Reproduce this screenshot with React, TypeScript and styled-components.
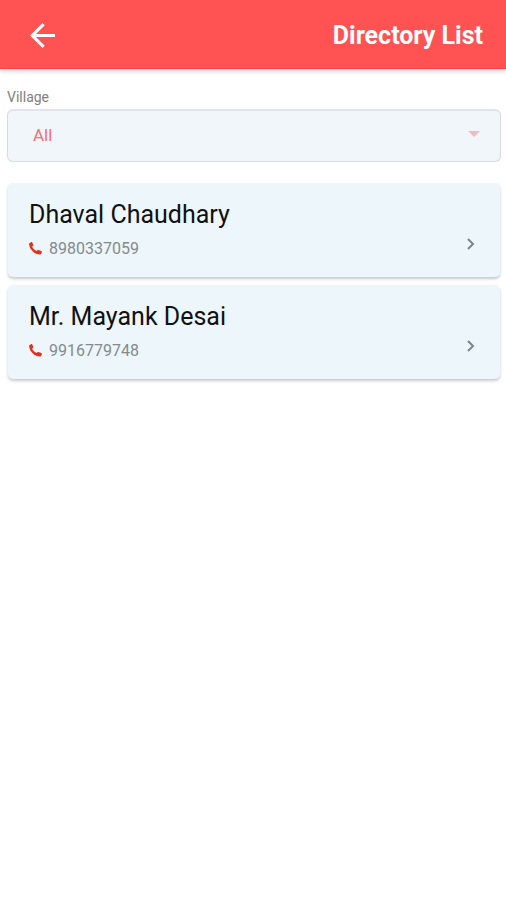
import React from "react";
import styled, { createGlobalStyle } from "styled-components";

const GlobalStyle = createGlobalStyle`
  * { box-sizing: border-box; }
  body { margin: 0; background: #fff; font-family: Roboto, sans-serif; }
  h1, h2, ul { margin: 0; padding: 0; }
`;

const AppBar = styled.header`
  display: flex;
  align-items: center;
  justify-content: space-between;
  height: 69px;
  padding: 3px 23px 0 30px;
  border-bottom: 1px solid #ee4747;
  background: #ff5252;
  color: #fff;
  box-shadow: 0 2px 5px rgba(0, 0, 0, 0.2);
`;

const BackButton = styled.button`
  display: flex;
  padding: 0;
  border: 0;
  background: none;
  color: inherit;
  cursor: pointer;
`;

const Title = styled.h1`
  font-size: 25px;
  line-height: 32px;
  font-weight: 700;
`;

const Content = styled.main`
  padding: 20px 5px 20px 7px;
`;

const Label = styled.label`
  display: block;
  color: #808080;
  font-size: 14px;
  line-height: 16px;
`;

const SelectBox = styled.div`
  display: grid;
  align-items: center;
  margin-top: 4px;
  > * { grid-area: 1 / 1; }
  > svg { justify-self: end; margin: 0 21px 4px 0; pointer-events: none; }
`;

const Select = styled.select`
  width: 100%;
  height: 53px;
  padding: 0 48px 2px 25px;
  appearance: none;
  border: 1px solid #d8d8ea;
  border-top: 2px solid #e2e2f0;
  border-radius: 6px;
  background: #f1f6fa;
  color: #fa6d74;
  font: 400 17px/24px Roboto, sans-serif;
`;

const List = styled.ul`
  display: grid;
  gap: 8px;
  margin-top: 21px;
  padding: 0 1px;
  list-style: none;
`;

const Card = styled.a`
  display: flex;
  align-items: center;
  justify-content: space-between;
  height: 94px;
  padding: 0 23px 0 21px;
  border-radius: 5px;
  background: #edf6fb;
  box-shadow: 0 2px 3px rgba(40, 10, 30, 0.23);
  color: #111;
  text-decoration: none;
  > svg { margin-top: 28px; }
`;

const Name = styled.h2`
  font-size: 25px;
  line-height: 32px;
  font-weight: 400;
`;

const Phone = styled.div`
  display: flex;
  align-items: center;
  gap: 7px;
  margin-top: 6px;
  color: #858a8d;
  font-size: 16px;
  line-height: 24px;
  > svg { margin-bottom: 2px; }
`;

const contacts = [
  { name: "Dhaval Chaudhary", phone: "8980337059" },
  { name: "Mr. Mayank Desai", phone: "9916779748" },
];

export default function App() {
  return (
    <>
      <GlobalStyle />
      <AppBar>
        <BackButton aria-label="Back">
          <svg width="25" height="25" viewBox="4 4 16 16" fill="currentColor">
            <path d="M20 11H7.830l5.590-5.590L12 4l-8 8 8 8 1.410-1.410L7.830 13H20z" />
          </svg>
        </BackButton>
        <Title>Directory List</Title>
      </AppBar>
      <Content>
        <Label htmlFor="village">Village</Label>
        <SelectBox>
          <Select id="village" defaultValue="All">
            <option>All</option>
          </Select>
          <svg width="12" height="6" viewBox="0 0 12 6" fill="#f6b9be">
            <path d="M0 0h12L6 6z" />
          </svg>
        </SelectBox>
        <List>
          {contacts.map((c) => (
            <li key={c.phone}>
              <Card href={`tel:${c.phone}`}>
                <div>
                  <Name>{c.name}</Name>
                  <Phone>
                    <svg width="13" height="13" viewBox="0 0 13 13" fill="#e5301c">
                      <path d="M.5 1.200 2.300 0q.7-.2 1 .5l1 2.300q.2.700-.4 1.200l-.8.700q1.300 3.100 4.300 4.400l.9-.9q.5-.5 1.200-.2l2.700 1q.9.400.6 1.200l-.5 1.500q-.3.800-1.200.8Q6.800 12.500 3.600 9.300.1 5.800 0 2q0-.5.5-.8z" />
                    </svg>
                    {c.phone}
                  </Phone>
                </div>
                <svg width="12" height="14" viewBox="0 0 12 14" fill="none" stroke="#7d8589" strokeWidth="2">
                  <path d="M3 2l5 5-5 5" />
                </svg>
              </Card>
            </li>
          ))}
        </List>
      </Content>
    </>
  );
}
